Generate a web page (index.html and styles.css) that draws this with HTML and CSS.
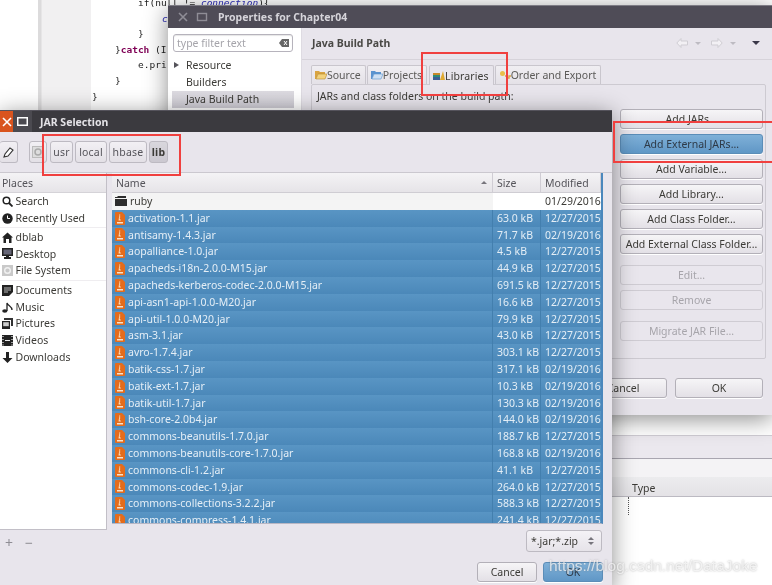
FILE: index.html
```html
<!DOCTYPE html>
<html lang="en">
<head>
<meta charset="utf-8">
<title>JAR Selection</title>
<link rel="stylesheet" href="styles.css">
</head>
<body>
<svg class="defs" width="0" height="0">
  <symbol id="jar" viewBox="0 0 10 13">
    <path d="M1 0h6l3 3v9a1 1 0 0 1-1 1H1a1 1 0 0 1-1-1V1a1 1 0 0 1 1-1z" fill="#e46c1c"/>
    <path d="M2 10h6v1.500H2z" fill="#f8e2cc"/>
    <path d="M4.500 2l1 1-1 1 1 1-1 1 1.500 2.500H3.500z" fill="#fbd9b5"/>
  </symbol>
  <symbol id="folder" viewBox="0 0 12 10">
    <path d="M0 2V1h2l1-1h8v2zM0 3h12v7H0z" fill="#2d2d2d"/>
  </symbol>
</svg>
<div class="desktop">
  <div class="editor">
    <div class="gutter"></div>
    <div class="code">
      <div class="indent3">if(null != <i class="field">connection</i>){</div>
      <div class="indent4"><i class="field">c</i></div>
      <div class="indent3">}</div>
      <div class="indent2">}<b class="kw">catch</b> (I</div>
      <div class="indent3">e.pri</div>
      <div class="indent2">}</div>
      <div class="indent1">}</div>
    </div>
  </div>

  <div class="lower">
    <div class="lower-tabs"></div>
    <div class="lower-head"><span class="lower-type">Type</span></div>
    <div class="lower-body"><span class="dots"></span></div>
  </div>

  <section class="window props">
    <header class="titlebar props-title">
      <svg class="wm" width="12" height="12" viewBox="0 0 12 12"><path d="M2 2l8 8M10 2l-8 8" stroke="#8f8d96" stroke-width="1.6"/></svg>
      <svg class="wm" width="12" height="12" viewBox="0 0 12 12"><rect x="1.5" y="2.5" width="9" height="7" fill="none" stroke="#8f8d96" stroke-width="1.4"/></svg>
      <span class="title">Properties for Chapter04</span>
    </header>
    <div class="props-main">
      <aside class="props-tree">
        <div class="filter"><span>type filter text</span>
          <svg width="10" height="8" viewBox="0 0 10 8"><path d="M3 0h7v8H3L0 4z" fill="#666"/><path d="M5 2l3 4M8 2L5 6" stroke="#fff"/></svg>
        </div>
        <div class="tree-row"><span class="arrow"></span>Resource</div>
        <div class="tree-row">Builders</div>
        <div class="tree-row active">Java Build Path</div>
      </aside>
      <main class="props-pane">
        <div class="pane-head">
          <h1>Java Build Path</h1>
          <div class="nav">
            <svg width="12" height="10" viewBox="0 0 12 10"><path d="M5 .5L.8 5 5 9.500V7h6.500V3H5z" fill="#f2f0f4" stroke="#cfcdd3"/></svg>
            <i class="tri grey"></i>
            <svg width="12" height="10" viewBox="0 0 12 10"><path d="M7 .5L11.200 5 7 9.500V7H.5V3H7z" fill="#f2f0f4" stroke="#cfcdd3"/></svg>
            <i class="tri grey"></i>
            <i class="tri dark"></i>
          </div>
        </div>
        <div class="tabs">
          <div class="tab"><svg width="12" height="10" viewBox="0 0 12 10"><path d="M0 1h4l1 1h5v2H3L1 9H0z" fill="#d9a441"/><path d="M3 4h9l-2 5H1z" fill="#f3d27c" stroke="#b78a2e" stroke-width=".6"/></svg>Source</div>
          <div class="tab"><svg width="12" height="10" viewBox="0 0 12 10"><path d="M0 1h4l1 1h5v2H3L1 9H0z" fill="#5b93cf"/><path d="M3 4h9l-2 5H1z" fill="#cfe0f3" stroke="#5b93cf" stroke-width=".6"/></svg>Projects</div>
          <div class="tab selected"><svg width="12" height="10" viewBox="0 0 12 10"><path d="M0 2h7v2H0z" fill="#c88a2a"/><path d="M0 4h7v2H0z" fill="#2f8a7a"/><path d="M0 6h7v3H0z" fill="#3a5f95"/><path d="M7 9l3-9 2 9z" fill="#e0a92f"/></svg>Libraries</div>
          <div class="tab"><svg width="12" height="10" viewBox="0 0 12 10"><circle cx="3.500" cy="3.500" r="2.500" fill="#e8c04a"/><path d="M6 6h2v2h2v-2h2" fill="none" stroke="#d9a441" stroke-width="1.400"/></svg>Order and Export</div>
        </div>
        <div class="tab-body">
          <p class="hint">JARs and class folders on the build path:</p>
          <div class="buttons">
            <button class="btn">Add JARs...</button>
            <button class="btn primary">Add External JARs...</button>
            <button class="btn">Add Variable...</button>
            <button class="btn">Add Library...</button>
            <button class="btn">Add Class Folder...</button>
            <button class="btn">Add External Class Folder...</button>
            <button class="btn off gap">Edit...</button>
            <button class="btn off">Remove</button>
            <button class="btn off gap">Migrate JAR File...</button>
          </div>
        </div>
        <div class="props-actions">
          <button class="btn act">Cancel</button>
          <button class="btn act">OK</button>
        </div>
      </main>
    </div>
  </section>

  <section class="window jar">
    <header class="titlebar jar-title">
      <span class="close"><svg width="10" height="10" viewBox="0 0 10 10"><path d="M1 1l8 8M9 1L1 9" stroke="#fff" stroke-width="1.600"/></svg></span>
      <span class="max"><svg width="11" height="9" viewBox="0 0 11 9"><rect x=".75" y=".75" width="9.500" height="7.500" fill="none" stroke="#fff" stroke-width="1.500"/></svg></span>
      <span class="title">JAR Selection</span>
    </header>
    <div class="toolbar">
      <button class="crumb pencil"><svg width="11" height="11" viewBox="0 0 11 11"><path d="M1 10l1-3 5-6 3 2-5 6z" fill="#fff" stroke="#333" stroke-width="1.100"/></svg></button>
      <button class="crumb disk"><svg width="12" height="12" viewBox="0 0 12 12"><rect x=".5" y=".5" width="11" height="11" fill="#ddd" stroke="#bbb"/><circle cx="6" cy="6" r="3" fill="none" stroke="#aaa" stroke-width="1.500"/></svg></button>
      <button class="crumb c-usr">usr</button>
      <button class="crumb c-local">local</button>
      <button class="crumb c-hbase">hbase</button>
      <button class="crumb current">lib</button>
    </div>
    <div class="browser">
      <div class="places-col">
        <aside class="places">
          <div class="places-head">Places</div>
          <div class="place"><svg width="11" height="11" viewBox="0 0 11 11"><circle cx="4.500" cy="4.500" r="3.300" fill="none" stroke="#222" stroke-width="1.500"/><path d="M7 7l3.500 3.500" stroke="#222" stroke-width="1.800"/></svg>Search</div>
          <div class="place"><svg width="11" height="11" viewBox="0 0 11 11"><circle cx="5.500" cy="5.500" r="5.200" fill="#222"/><path d="M5.500 2.500v3h2.500" fill="none" stroke="#fff"/></svg>Recently Used</div>
          <div class="sep"></div>
          <div class="place"><svg width="11" height="11" viewBox="0 0 11 11"><path d="M5.500.5L11 5.500H9.500V11H7V7H4v4H1.500V5.500H0z" fill="#222"/></svg>dblab</div>
          <div class="place"><svg width="11" height="11" viewBox="0 0 11 11"><path d="M0 0h11v8H7v1h2v2H2V9h2V8H0z" fill="#222"/><path d="M1.500 1.500h8v5h-8z" fill="#667"/></svg>Desktop</div>
          <div class="place muted"><svg width="11" height="11" viewBox="0 0 11 11"><rect width="11" height="11" fill="#c9c9c9"/><circle cx="5.500" cy="5.500" r="2.800" fill="none" stroke="#f1f1f1" stroke-width="1.400"/></svg>File System</div>
          <div class="sep"></div>
          <div class="place"><svg width="11" height="11" viewBox="0 0 11 11"><path d="M0 0h11v7l-4 4H0z" fill="#222"/><path d="M2 3h7M2 5h7M2 7h4" stroke="#ddd" stroke-width=".8"/></svg>Documents</div>
          <div class="place"><svg width="11" height="11" viewBox="0 0 11 11"><ellipse cx="2.800" cy="9" rx="2.600" ry="1.800" fill="#222"/><path d="M5 9V1c1 3 5 3 5 7" fill="none" stroke="#222" stroke-width="1.300"/></svg>Music</div>
          <div class="place"><svg width="11" height="11" viewBox="0 0 11 11"><path d="M2 0h9v8H9V2H2z" fill="#333"/><path d="M0 3h8v8H0z" fill="#222"/><path d="M1.200 4.200h5.600v4H1.200z" fill="#ccc"/></svg>Pictures</div>
          <div class="place"><svg width="11" height="11" viewBox="0 0 11 11"><rect width="11" height="11" fill="#222"/><path d="M1 1v1M1 4v1M1 7v1M1 9.500v1M10 1v1M10 4v1M10 7v1M10 9.500v1M3 5.500h5" stroke="#eee" stroke-width="1.200"/></svg>Videos</div>
          <div class="place"><svg width="11" height="11" viewBox="0 0 11 11"><path d="M4 0h3v6h3.500L5.500 11 .5 6H4z" fill="#222"/></svg>Downloads</div>
        </aside>
        <div class="places-tools"><span>+</span><span>−</span></div>
      </div>
      <div class="files-col">
        <div class="files">
          <div class="row head"><span class="name">Name<i class="tri up"></i></span><span>Size</span><span>Modified</span></div>
          <div class="row folder"><span class="name"><svg class="ic" width="12" height="10"><use href="#folder"/></svg>ruby</span><span></span><span>01/29/2016</span></div>
          <div class="row sel"><span class="name"><svg class="ic" width="10" height="13"><use href="#jar"/></svg>activation-1.1.jar</span><span>63.0 kB</span><span>12/27/2015</span></div>
          <div class="row sel"><span class="name"><svg class="ic" width="10" height="13"><use href="#jar"/></svg>antisamy-1.4.3.jar</span><span>71.7 kB</span><span>02/19/2016</span></div>
          <div class="row sel"><span class="name"><svg class="ic" width="10" height="13"><use href="#jar"/></svg>aopalliance-1.0.jar</span><span>4.5 kB</span><span>12/27/2015</span></div>
          <div class="row sel"><span class="name"><svg class="ic" width="10" height="13"><use href="#jar"/></svg>apacheds-i18n-2.0.0-M15.jar</span><span>44.9 kB</span><span>12/27/2015</span></div>
          <div class="row sel"><span class="name"><svg class="ic" width="10" height="13"><use href="#jar"/></svg>apacheds-kerberos-codec-2.0.0-M15.jar</span><span>691.5 kB</span><span>12/27/2015</span></div>
          <div class="row sel"><span class="name"><svg class="ic" width="10" height="13"><use href="#jar"/></svg>api-asn1-api-1.0.0-M20.jar</span><span>16.6 kB</span><span>12/27/2015</span></div>
          <div class="row sel"><span class="name"><svg class="ic" width="10" height="13"><use href="#jar"/></svg>api-util-1.0.0-M20.jar</span><span>79.9 kB</span><span>12/27/2015</span></div>
          <div class="row sel"><span class="name"><svg class="ic" width="10" height="13"><use href="#jar"/></svg>asm-3.1.jar</span><span>43.0 kB</span><span>12/27/2015</span></div>
          <div class="row sel"><span class="name"><svg class="ic" width="10" height="13"><use href="#jar"/></svg>avro-1.7.4.jar</span><span>303.1 kB</span><span>12/27/2015</span></div>
          <div class="row sel"><span class="name"><svg class="ic" width="10" height="13"><use href="#jar"/></svg>batik-css-1.7.jar</span><span>317.1 kB</span><span>02/19/2016</span></div>
          <div class="row sel"><span class="name"><svg class="ic" width="10" height="13"><use href="#jar"/></svg>batik-ext-1.7.jar</span><span>10.3 kB</span><span>02/19/2016</span></div>
          <div class="row sel"><span class="name"><svg class="ic" width="10" height="13"><use href="#jar"/></svg>batik-util-1.7.jar</span><span>130.3 kB</span><span>02/19/2016</span></div>
          <div class="row sel"><span class="name"><svg class="ic" width="10" height="13"><use href="#jar"/></svg>bsh-core-2.0b4.jar</span><span>144.0 kB</span><span>02/19/2016</span></div>
          <div class="row sel"><span class="name"><svg class="ic" width="10" height="13"><use href="#jar"/></svg>commons-beanutils-1.7.0.jar</span><span>188.7 kB</span><span>12/27/2015</span></div>
          <div class="row sel"><span class="name"><svg class="ic" width="10" height="13"><use href="#jar"/></svg>commons-beanutils-core-1.7.0.jar</span><span>168.8 kB</span><span>02/19/2016</span></div>
          <div class="row sel"><span class="name"><svg class="ic" width="10" height="13"><use href="#jar"/></svg>commons-cli-1.2.jar</span><span>41.1 kB</span><span>12/27/2015</span></div>
          <div class="row sel"><span class="name"><svg class="ic" width="10" height="13"><use href="#jar"/></svg>commons-codec-1.9.jar</span><span>264.0 kB</span><span>12/27/2015</span></div>
          <div class="row sel"><span class="name"><svg class="ic" width="10" height="13"><use href="#jar"/></svg>commons-collections-3.2.2.jar</span><span>588.3 kB</span><span>12/27/2015</span></div>
          <div class="row sel"><span class="name"><svg class="ic" width="10" height="13"><use href="#jar"/></svg>commons-compress-1.4.1.jar</span><span>241.4 kB</span><span>12/27/2015</span></div>
        </div>
        <div class="combo-line">
          <button class="combo">*.jar;*.zip<span class="updown"><i class="tri up"></i><i class="tri down"></i></span></button>
        </div>
        <div class="jar-actions">
          <button class="btn jact">Cancel</button>
          <button class="btn jact primary">OK</button>
        </div>
      </div>
    </div>
  </section>

  <div class="mark m1"></div>
  <div class="mark m2"></div>
  <div class="mark m3"></div>
  <div class="watermark">https://blog.csdn.net/DataJoke</div>
</div>
</body>
</html>
```
FILE: styles.css
```css
* { box-sizing: border-box; }
html, body { margin: 0; padding: 0; background: #fff; }
.defs { position: absolute; }
.desktop {
  position: relative;
  width: 772px;
  height: 585px;
  overflow: hidden;
  font-family: "Noto Sans", sans-serif;
  font-size: 10.5px;
  color: #3c3b37;
  background: #fff;
  filter: blur(0.35px);
}
button { font: inherit; color: inherit; margin: 0; }

/* editor behind the dialogs */
.editor { position: absolute; left: 0; top: 0; width: 772px; height: 440px; display: flex; }
.gutter {
  width: 53px;
  flex: none;
  margin-left: 38px;
  border-left: 3px solid #dcdbdc;
  background: linear-gradient(90deg, #e6e5e6 0 1px, #f1f0f1 1px);
}
.code {
  font-family: "DejaVu Sans Mono", monospace;
  font-size: 9.5px;
  line-height: 15.6px;
  color: #222;
  margin-top: -5px;
  white-space: nowrap;
}
.indent1 { padding-left: 1px; }
.indent2 { padding-left: 24px; }
.indent3 { padding-left: 47px; }
.indent4 { padding-left: 71px; }
.field { color: #2a2ab8; }
.kw { color: #7f0055; font-weight: bold; }

.lower { position: absolute; left: 0; right: 0; top: 435px; bottom: 0; display: flex; flex-direction: column; }
.lower-tabs { height: 24px; background: #ebe8ee; border-top: 1px solid #cfccd3; border-bottom: 1px solid #a9a6b0; }
.lower-head { height: 38px; flex: none; background: linear-gradient(#f4f3f5 0 18px, #ececee 18px, #e4e2e6); border-bottom: 1px solid #bcbac2; padding-left: 632px; padding-top: 21px; }
.lower-type { display: block; line-height: 16px; }
.lower-body { flex: 1; background: #fff; padding-left: 628px; }
.dots { display: block; width: 1px; height: 18px; border-left: 1px dotted #555; }

/* windows */
.window { position: absolute; background: #e8e5ec; box-shadow: 0 4px 22px rgba(0, 0, 0, .45); }
.titlebar { display: flex; align-items: center; }
.title { font-weight: bold; color: #d6d4da; }

.props { left: 168px; top: 5px; width: 604px; height: 410px; border-top: 1px solid #7e7c85; }
.props-title { height: 22px; background: #4f4c57; padding-left: 9px; gap: 7px; }
.props-title .title { margin-left: 3px; }
.wm { flex: none; }
.props-main { display: flex; height: 382px; }
.props-tree { width: 134px; flex: none; background: #fff; padding: 6px 6px 0 5px; border-right: 1px solid #dedbe2; }
.filter {
  height: 18px;
  width: 120px;
  border: 1px solid #b6b3bc;
  border-radius: 3px;
  padding: 0 3px;
  display: flex;
  align-items: center;
  justify-content: space-between;
  color: #a5a4aa;
  box-shadow: inset 0 1px 1px #e6e6e6;
}
.tree-row { height: 17px; line-height: 17px; padding-left: 13px; position: relative; }
.filter + .tree-row { margin-top: 5px; }
.tree-row.active { background: linear-gradient(#dddbe1, #cfcdd5); width: 122px; margin-left: -1px; padding-left: 14px; }
.arrow {
  position: absolute;
  left: 1px;
  top: 5px;
  border-left: 5px solid #55535a;
  border-top: 3px solid transparent;
  border-bottom: 3px solid transparent;
}
.props-pane { flex: 1; display: flex; flex-direction: column; }
.pane-head {
  height: 32px;
  flex: none;
  border-bottom: 1px solid #d6d3da;
  display: flex;
  align-items: center;
  justify-content: space-between;
  padding: 0 12px 1px 10px;
}
h1 { margin: 0; font-size: 10.5px; font-weight: bold; color: #4a4946; }
.nav { display: flex; align-items: center; gap: 7px; }
.tri { display: inline-block; width: 0; height: 0; border-left: 3px solid transparent; border-right: 3px solid transparent; }
.tri.grey { border-top: 3px solid #bdbbc2; margin-right: 3px; }
.tri.dark { border-left-width: 4px; border-right-width: 4px; border-top: 4px solid #3a3848; margin-left: 6px; }
.tri.up { border-bottom: 3px solid #77757c; }
.tri.down { border-top: 3px solid #77757c; }

.tabs { display: flex; align-items: flex-end; height: 24px; padding-left: 9px; gap: 1px; flex: none; }
.tab {
  height: 19px;
  display: flex;
  align-items: center;
  padding: 0 4px 0 3px;
  background: linear-gradient(#f0eef2, #e4e1e7);
  border: 1px solid #c9c6cd;
  border-bottom: 0;
  border-radius: 2px 2px 0 0;
  color: #5b5a58;
}
.tab.selected { height: 20px; background: #e8e5ec; color: #3c3b37; margin-left: 1px; padding-right: 4px; z-index: 1; margin-bottom: -1px; letter-spacing: .1px; }
.tab-body {
  height: 275px;
  flex: none;
  margin-left: 9px;
  margin-right: 6px;
  border: 1px solid #cdcad1;
  border-radius: 2px;
  padding: 3px 2px 0 5px;
}
.hint { margin: 0; line-height: 16px; height: 21px; }
.buttons { display: flex; flex-direction: column; align-items: flex-end; gap: 5px; }
.btn {
  height: 20px;
  width: 143px;
  flex: none;
  border: 1px solid #b3b0b8;
  border-radius: 3px;
  background: linear-gradient(#f6f5f7, #e3e0e6);
  padding: 0;
  line-height: 17px;
  text-align: center;
  box-shadow: 0 1px 0 #fff;
}
.btn.primary { background: linear-gradient(#7fb0d8, #6097c6); border-color: #5b8db8; color: #2e3a48; }
.btn.off { color: #a7a5ab; background: #e9e6ed; border-color: #cfccd3; box-shadow: none; }
.btn.gap { margin-top: 6px; }
.props-actions { display: flex; justify-content: flex-end; gap: 8px; padding: 19px 9px 0 0; }
.btn.act { width: 88px; }

/* file chooser */
.jar { left: 0; top: 110px; width: 612px; height: 480px; border-top: 1px solid #55535c; }
.jar-title { height: 21px; background: #3b3a3f; }
.close { width: 13px; height: 21px; background: #d9541e; display: flex; align-items: center; justify-content: flex-end; padding-right: 1px; overflow: hidden; }
.max { width: 19px; height: 21px; background: #4b4a50; display: flex; align-items: center; justify-content: center; }
.jar-title .title { margin-left: 8px; color: #e3e2e6; }
.toolbar { height: 41px; display: flex; align-items: center; gap: 2px; border-bottom: 1px solid #cbc8cf; }
.crumb {
  height: 22px;
  padding: 0;
  border: 1px solid #bdbac2;
  border-radius: 3px;
  background: linear-gradient(#f2f0f4, #e3e0e6);
  color: #55545a;
  letter-spacing: .2px;
  text-align: center;
}
.crumb.pencil { width: 18px; border-left: 0; margin-right: 9px; display: flex; align-items: center; justify-content: center; }
.crumb.disk { width: 18px; display: flex; align-items: center; justify-content: center; margin-right: 1px; }
.c-usr { width: 23px; }
.c-local { width: 32px; }
.c-hbase { width: 38px; }
.crumb.current { width: 19px; background: linear-gradient(#d9d7dd, #cbc8d0); font-weight: bold; color: #3c3b37; }
.browser { display: flex; }
.places-col { width: 107px; flex: none; }
.places { height: 357px; background: #fff; border-right: 1px solid #c2bfc7; border-bottom: 1px solid #c2bfc7; }
.places-head { height: 20px; line-height: 20px; padding-left: 2px; background: linear-gradient(#f4f3f5, #e6e4e8); border-bottom: 1px solid #d5d3d8; color: #55545a; }
.place { height: 16.8px; line-height: 16.8px; display: flex; align-items: center; gap: 2.500px; padding-left: 2px; white-space: nowrap; }
.place svg { flex: none; }
.place.muted { margin-bottom: 1px; }
.sep { height: 1.200px; margin: .5px 0; background: #efedf0; }
.places-tools { display: flex; gap: 12px; padding: 2px 0 0 5px; color: #8f8d94; font-size: 14px; line-height: 22px; }
.files-col { flex: 1; padding-left: 5px; padding-right: 9px; }
.files { height: 351px; overflow: hidden; border-right: 2px solid #4a87bc; border-bottom: 1px solid #b9b7c4; }
.row { display: grid; grid-template-columns: 381px 48px 1fr; height: 16.8px; line-height: 16.8px; white-space: nowrap; }
.row > span { padding-left: 4px; overflow: hidden; display: flex; align-items: center; }
.row .name { padding-left: 3px; }
.ic { flex: none; margin-right: 3px; }
.row.folder .ic { margin-right: 3px; }
.row.head { height: 20px; line-height: 20px; background: linear-gradient(#f4f3f5, #e6e4e8); border-bottom: 1px solid #cfcdd3; color: #55545a; }
.row.head > span { border-right: 1px solid #d0cdd4; }
.row.head .name { justify-content: space-between; padding-right: 5px; padding-left: 4px; }
.row.folder .name { background: #f4f4f4; }
.row.folder { background: #fff; }
.row.sel { background: linear-gradient(#5995c4, #4b88b9); color: #e4eef6; }
.row.sel > span:not(:last-child) { border-right: 1px solid #437fae; }
.combo-line { display: flex; justify-content: flex-end; padding-top: 6px; padding-right: 1px; }
.combo { width: 76px; height: 22px; border: 1px solid #bdbac2; border-radius: 3px; background: linear-gradient(#f4f2f6, #e6e3e9); display: flex; align-items: center; justify-content: space-between; padding: 0 7px 0 4px; }
.updown { display: flex; flex-direction: column; gap: 2px; }
.jar-actions { display: flex; justify-content: flex-end; gap: 6px; padding-top: 10px; }
.btn.jact { width: 60px; height: 20px; }

/* annotation overlays */
.mark { position: absolute; border: 2px solid #f0403f; }
.m1 { left: 42px; top: 134px; width: 139px; height: 42px; }
.m2 { left: 421px; top: 52px; width: 87px; height: 44px; }
.m3 { left: 613px; top: 121px; width: 162px; height: 42px; }
.watermark {
  position: absolute;
  left: 549px;
  top: 557px;
  font-family: "Liberation Sans", sans-serif;
  font-size: 15.5px;
  line-height: 18px;
  color: rgba(255, 255, 255, .7);
  text-shadow: 0 0 2px rgba(110, 110, 110, .55);
  white-space: nowrap;
}
```
